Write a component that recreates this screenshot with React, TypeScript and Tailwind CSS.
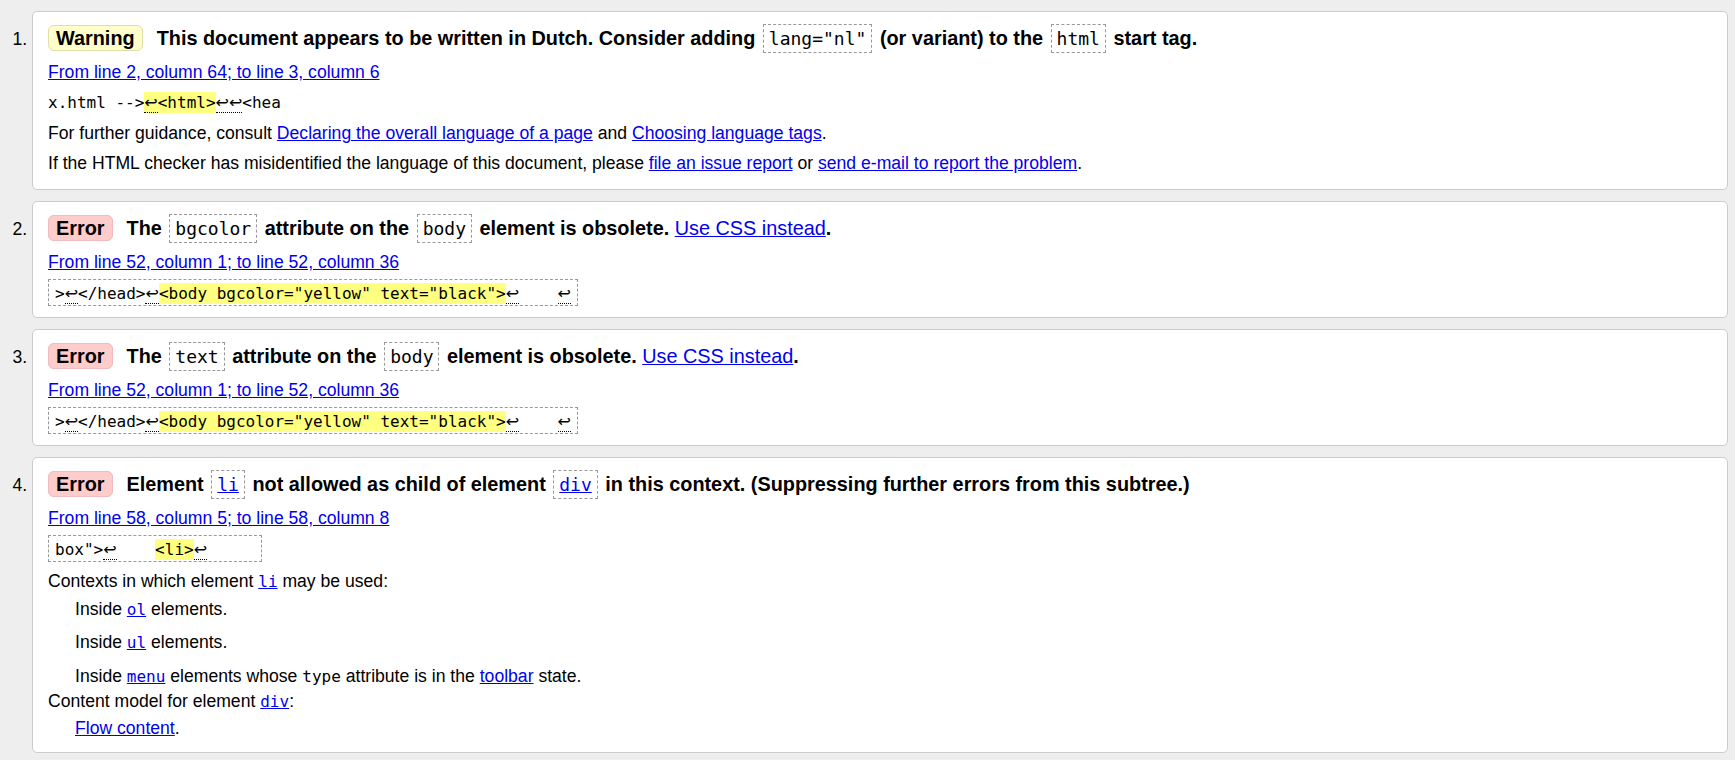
import React from "react";

function Lf({ n = 1 }: { n?: number }) {
  return (
    <span className="font-['DejaVu_Sans',sans-serif] border-b border-dotted border-black">
      {"↩".repeat(n)}
    </span>
  );
}

function Hl({ children }: { children: React.ReactNode }) {
  return <span className="bg-[#ffff80] py-[1px]">{children}</span>;
}

function A({ children }: { children: React.ReactNode }) {
  return <a className="text-[#0000ee] underline cursor-pointer">{children}</a>;
}

function CodeA({ children }: { children: React.ReactNode }) {
  return (
    <a className="font-['DejaVu_Sans_Mono',monospace] text-[16px] text-[#0000ee] underline cursor-pointer">
      {children}
    </a>
  );
}

function Mono({ children }: { children: React.ReactNode }) {
  return <code className="font-['DejaVu_Sans_Mono',monospace] text-[16px]">{children}</code>;
}

function HCode({ children }: { children: React.ReactNode }) {
  return (
    <code className="mx-[2px] border border-dashed border-[#999] px-[5px] py-[3px] font-['DejaVu_Sans_Mono',monospace] text-[18px] font-normal">
      {children}
    </code>
  );
}

function Badge({ kind, children }: { kind: "warning" | "error"; children: React.ReactNode }) {
  return kind === "warning" ? (
    <span className="mr-[14px] rounded-[6px] border border-[#dedea8] bg-[#ffffcc] px-[7px] py-[1px]">
      {children}
    </span>
  ) : (
    <span className="mr-[14px] rounded-[6px] border border-[#eebcbc] bg-[#ffcccc] px-[7px] py-[1px]">
      {children}
    </span>
  );
}

function Extract({ children }: { children: React.ReactNode }) {
  return (
    <code className="whitespace-pre border border-dashed border-[#999] px-[6px] pt-[4px] pb-[2px] font-['DejaVu_Sans_Mono',monospace] text-[16px]">
      {children}
    </code>
  );
}

function BodyExtract() {
  return (
    <Extract>
      {">"}
      <Lf />
      {"</head>"}
      <Lf />
      <Hl>{'<body bgcolor="yellow" text="black">'}</Hl>
      <Lf />
      {"    "}
      <Lf />
    </Extract>
  );
}

export default function App() {
  return (
    <div className="min-h-screen bg-[#eeeeee] font-['Liberation_Sans',Arial,sans-serif] text-[17.6px] leading-[20px] text-black">
      <ol className="list-decimal pl-[32px] pr-[7px] pt-[11px] pb-[8px]">
        <li className="mb-[11px] rounded-[5px] border border-[#cccccc] bg-white px-[15px] pt-[12px] pb-[16px]">
          <p className="whitespace-nowrap text-[19.85px] font-bold leading-[29px]">
            <Badge kind="warning">Warning</Badge>
            This document appears to be written in Dutch. Consider adding <HCode>{'lang="nl"'}</HCode> (or
            variant) to the <HCode>html</HCode> start tag.
          </p>
          <p className="mt-[9px]">
            <A>From line 2, column 64; to line 3, column 6</A>
          </p>
          <p className="mt-[10px]">
            <code className="whitespace-pre font-['DejaVu_Sans_Mono',monospace] text-[16px]">
              {"x.html -->"}
              <Hl>
                <Lf />
                {"<html>"}
              </Hl>
              <Lf n={2} />
              {"<hea"}
            </code>
          </p>
          <p className="mt-[10px]">
            For further guidance, consult <A>Declaring the overall language of a page</A> and{" "}
            <A>Choosing language tags</A>.
          </p>
          <p className="mt-[10px]">
            If the HTML checker has misidentified the language of this document, please{" "}
            <A>file an issue report</A> or <A>send e-mail to report the problem</A>.
          </p>
        </li>

        <li className="mb-[11px] rounded-[5px] border border-[#cccccc] bg-white px-[15px] pt-[12px] pb-[13px]">
          <p className="whitespace-nowrap text-[19.85px] font-bold leading-[29px]">
            <Badge kind="error">Error</Badge>
            The <HCode>bgcolor</HCode> attribute on the <HCode>body</HCode> element is obsolete.{" "}
            <a className="font-normal text-[#0000ee] underline cursor-pointer">Use CSS instead</a>.
          </p>
          <p className="mt-[9px]">
            <A>From line 52, column 1; to line 52, column 36</A>
          </p>
          <p className="mt-[11px]">
            <BodyExtract />
          </p>
        </li>

        <li className="mb-[11px] rounded-[5px] border border-[#cccccc] bg-white px-[15px] pt-[12px] pb-[13px]">
          <p className="whitespace-nowrap text-[19.85px] font-bold leading-[29px]">
            <Badge kind="error">Error</Badge>
            The <HCode>text</HCode> attribute on the <HCode>body</HCode> element is obsolete.{" "}
            <a className="font-normal text-[#0000ee] underline cursor-pointer">Use CSS instead</a>.
          </p>
          <p className="mt-[9px]">
            <A>From line 52, column 1; to line 52, column 36</A>
          </p>
          <p className="mt-[11px]">
            <BodyExtract />
          </p>
        </li>

        <li className="rounded-[5px] border border-[#cccccc] bg-white px-[15px] pt-[12px] pb-[14px]">
          <p className="whitespace-nowrap text-[19.85px] font-bold leading-[29px]">
            <Badge kind="error">Error</Badge>
            Element{" "}
            <code className="mx-[2px] border border-dashed border-[#999] px-[5px] py-[3px] font-['DejaVu_Sans_Mono',monospace] text-[18px] font-normal">
              <a className="text-[#0000ee] underline cursor-pointer">li</a>
            </code>{" "}
            not allowed as child of element{" "}
            <code className="mx-[2px] border border-dashed border-[#999] px-[5px] py-[3px] font-['DejaVu_Sans_Mono',monospace] text-[18px] font-normal">
              <a className="text-[#0000ee] underline cursor-pointer">div</a>
            </code>{" "}
            in this context. (Suppressing further errors from this subtree.)
          </p>
          <p className="mt-[9px]">
            <A>From line 58, column 5; to line 58, column 8</A>
          </p>
          <p className="mt-[11px]">
            <Extract>
              {'box">'}
              <Lf />
              {"    "}
              <Hl>{"<li>"}</Hl>
              <Lf />
              {"     "}
            </Extract>
          </p>
          <p className="mt-[11px]">
            Contexts in which element <CodeA>li</CodeA> may be used:
          </p>
          <p className="mt-[7px] pl-[27px]">
            Inside <CodeA>ol</CodeA> elements.
          </p>
          <p className="mt-[12px] pl-[27px]">
            Inside <CodeA>ul</CodeA> elements.
          </p>
          <p className="mt-[13px] pl-[27px]">
            Inside <CodeA>menu</CodeA> elements whose <Mono>type</Mono> attribute is in the <A>toolbar</A> state.
          </p>
          <p className="mt-[4px]">
            Content model for element <CodeA>div</CodeA>:
          </p>
          <p className="mt-[6px] pl-[27px]">
            <A>Flow content</A>.
          </p>
        </li>
      </ol>
    </div>
  );
}
